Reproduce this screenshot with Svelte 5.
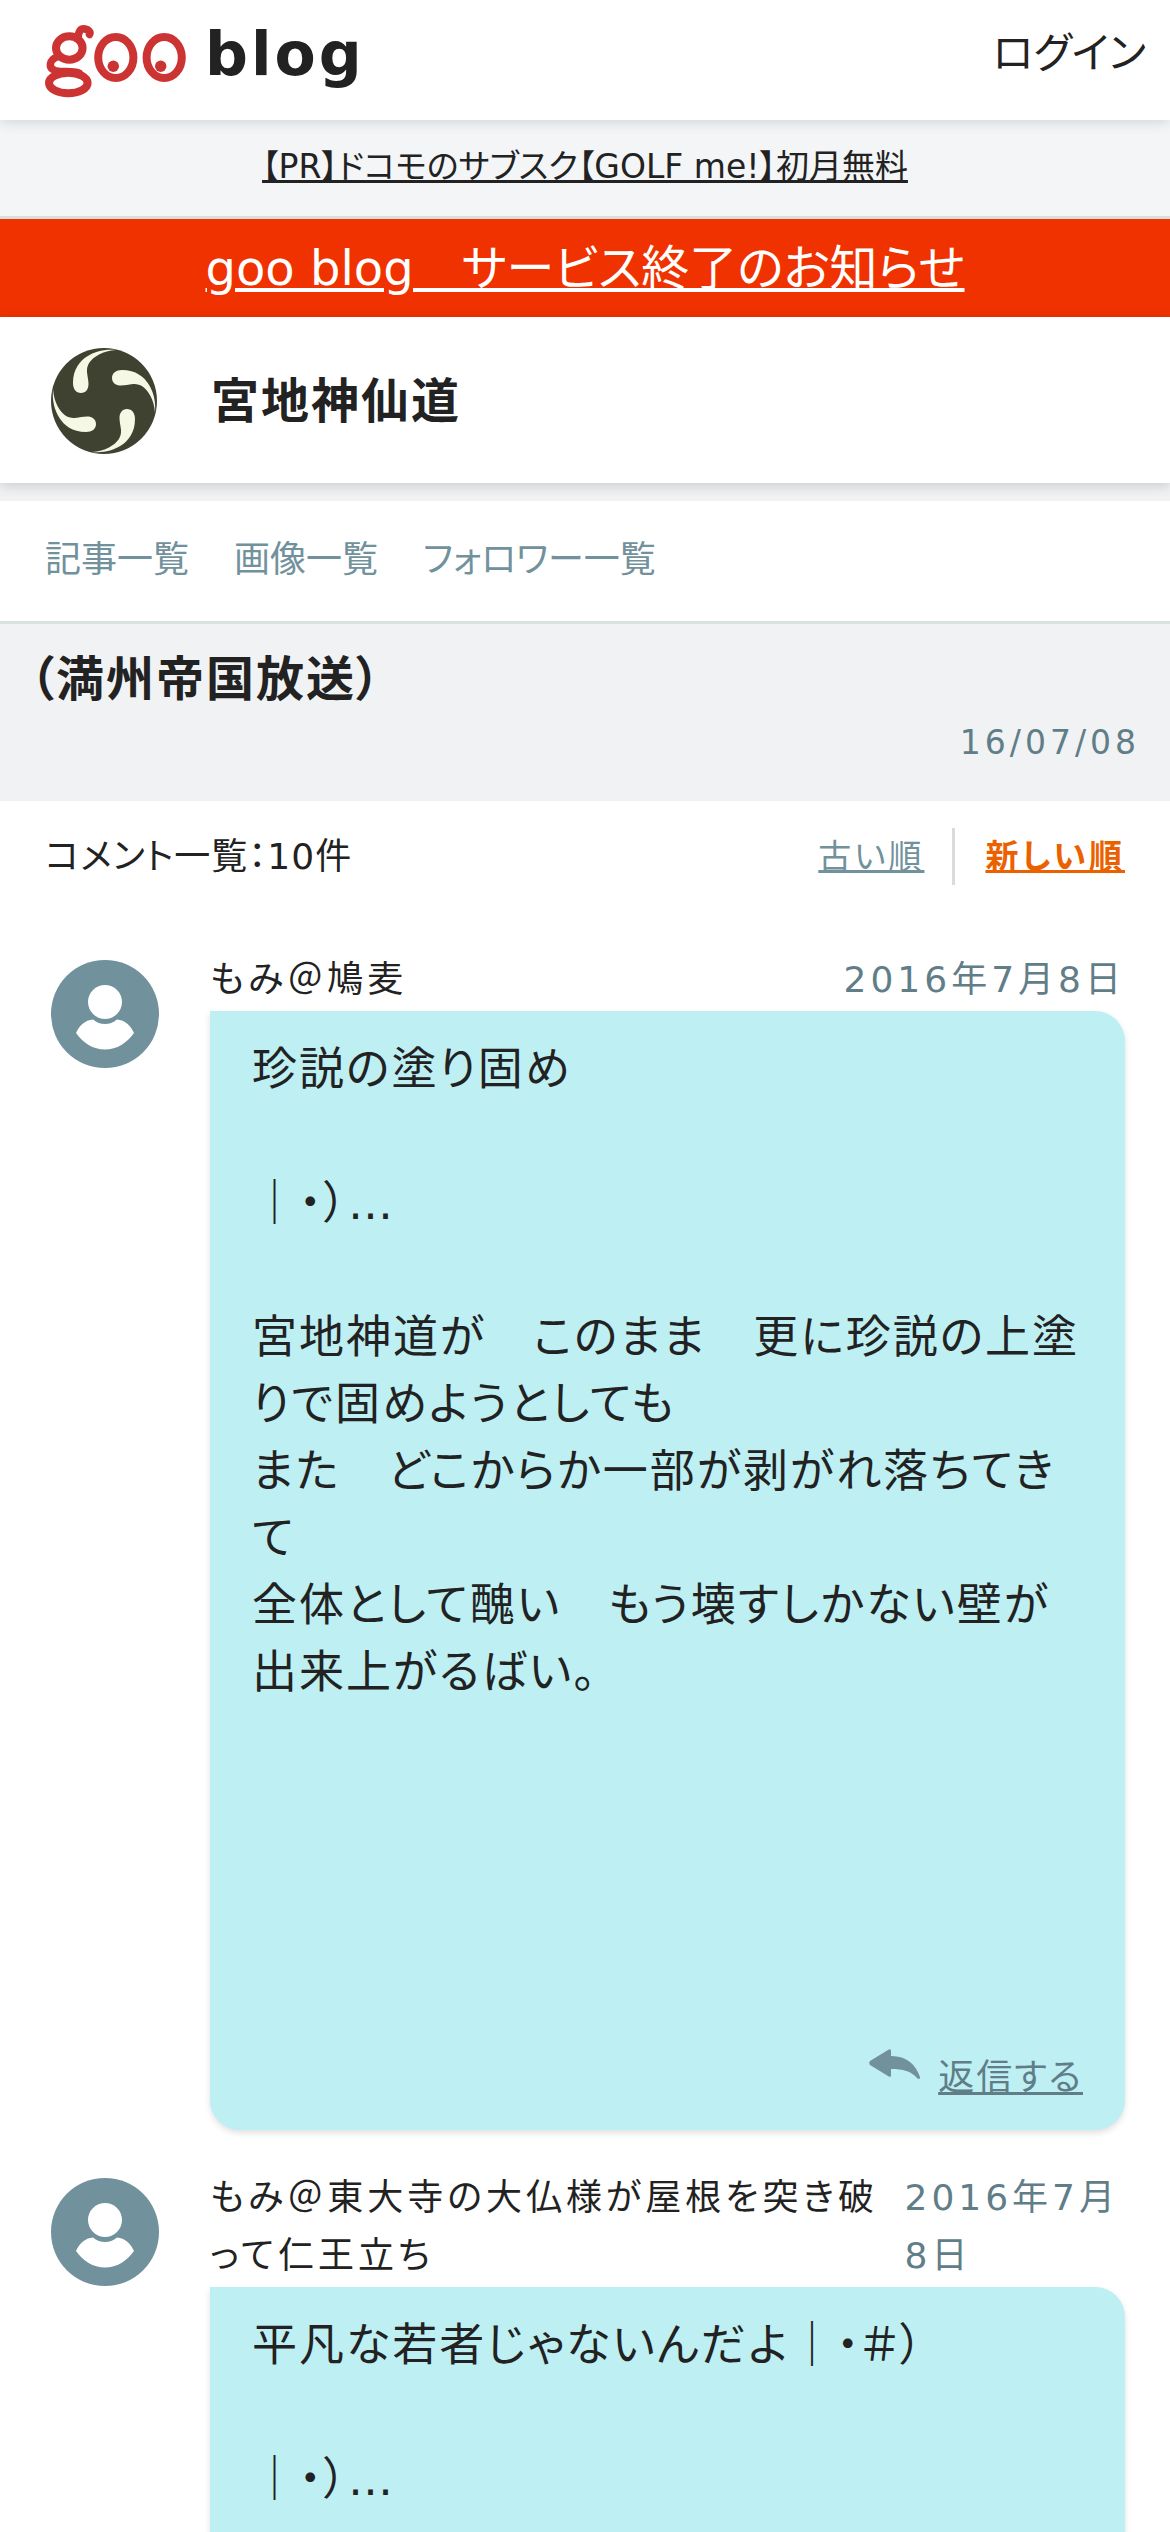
<script lang="ts">
	type Comment = {
		id: number;
		author: string;
		date: string;
		body: string;
	};

	const blogTitle = '宮地神仙道';
	const article = { title: '（満州帝国放送）', date: '16/07/08' };
	const total = 10;

	const menu = [
		{ label: '記事一覧', href: '#entries' },
		{ label: '画像一覧', href: '#images' },
		{ label: 'フォロワー一覧', href: '#followers' },
	];

	const comments: Comment[] = [
		{
			id: 1,
			author: 'もみ＠鳩麦',
			date: '2016年7月8日',
			body: '珍説の塗り固め\n\n｜・）…\n\n宮地神道が　このまま　更に珍説の上塗りで固めようとしても\nまた　どこからか一部が剥がれ落ちてきて\n全体として醜い　もう壊すしかない壁が出来上がるばい。\n\n\n\n\n\n',
		},
		{
			id: 2,
			author: 'もみ＠東大寺の大仏様が屋根を突き破って仁王立ち',
			date: '2016年7月8日',
			body: '平凡な若者じゃないんだよ｜・＃）\n\n｜・）…\n\n\n\n\n\n',
		},
	];

	let order = $state('new');
</script>

<div class="page">
	<header class="site-header">
		<a class="brand" href="#top" aria-label="goo blog">
			<svg class="goo" viewBox="45 23 142 74" aria-hidden="true">
				<g fill="none" stroke="#cb3433" stroke-width="8" stroke-linecap="round">
					<ellipse cx="69.3" cy="47" rx="13.3" ry="11.8" />
					<path d="M78 38C78 30 81 27 85 28C89 29 91 31 89.5 33.5" stroke-width="7.5" />
					<path d="M57 56C49 59 48 67 55 69.5C62 71.5 72 69.5 79 72" stroke-width="7.5" />
					<ellipse cx="68.3" cy="82" rx="19.3" ry="10.2" />
					<ellipse cx="115.8" cy="56.5" rx="17.6" ry="20.5" />
					<ellipse cx="164.2" cy="56.5" rx="17.6" ry="20.5" />
				</g>
				<circle cx="113.3" cy="65.3" r="5.7" fill="#cb3433" />
				<circle cx="160.7" cy="65.3" r="5.7" fill="#cb3433" />
			</svg>
			<span class="brand-name">blog</span>
		</a>
		<a class="login" href="#login">ログイン</a>
	</header>

	<div class="promo">
		<a href="#promo">【PR】ドコモのサブスク【GOLF me!】初月無料</a>
	</div>

	<div class="notice">
		<a href="#notice">goo blog　サービス終了のお知らせ</a>
	</div>

	<div class="blog-header">
		<svg class="blog-icon" viewBox="-53 -53 106 106" aria-hidden="true">
			<circle r="53" fill="#3f4230" />
			{#each [0, 90, 180, 270] as angle}
				<path
					transform="rotate({angle})"
					fill="#f6f8e6"
					d="M-23 -8C-28 -8 -31 -12 -31 -18C-31 -32 -24 -40 -17 -44.5C-9 -49.5 0 -52 12 -51C5 -50.5 0 -49 -5 -46.5C-14 -41.5 -17.5 -36 -17 -29C-16.5 -24 -15.5 -21 -15.5 -17C-15.5 -12 -18 -8 -23 -8Z"
				/>
			{/each}
		</svg>
		<h1>{blogTitle}</h1>
	</div>

	<nav class="menu">
		{#each menu as item}
			<a href={item.href}>{item.label}</a>
		{/each}
	</nav>

	<section class="article-head">
		<h2>{article.title}</h2>
		<time>{article.date}</time>
	</section>

	<main>
		<div class="list-head">
			<p>コメント一覧：{total}件</p>
			<div class="sort">
				<button class:active={order === 'old'} onclick={() => (order = 'old')}>古い順</button>
				<button class:active={order === 'new'} onclick={() => (order = 'new')}>新しい順</button>
			</div>
		</div>

		{#each comments as comment (comment.id)}
			<article class="comment">
				<svg class="avatar" viewBox="0 0 108 108" aria-hidden="true">
					<circle cx="54" cy="54" r="54" fill="#71919c" />
					<circle cx="54" cy="42" r="17" fill="#fff" />
					<path fill="#fff" d="M42 59.5C49 65.5 59 65.5 66 59.5C74 60 80 66 83 73C76 83 66 89.5 54 89.5C42 89.5 32 83 25 73C28 66 34 60 42 59.5Z" />
				</svg>
				<div class="comment-main">
					<div class="comment-meta">
						<span class="author">{comment.author}</span>
						<time>{comment.date}</time>
					</div>
					<div class="bubble">
						<p>{comment.body}</p>
						<a class="reply" href="#reply-{comment.id}">
							<svg viewBox="0 0 51 31" aria-hidden="true">
								<path fill="#71919c" d="M19 1C21 -0.5 22 0.5 22 2V7C38 7 47 16 51 28C51 30 50 31 48 29C42 22 34 20 22 20V26C22 28 21 28.5 19 27L1 16C0 15 0 13 1 12Z" />
							</svg>
							<span>返信する</span>
						</a>
					</div>
				</div>
			</article>
		{/each}
	</main>
</div>

<style>
	:global(body) {
		background: #fff;
	}

	.page {
		color: #222;
		font-family: 'DejaVu Sans', 'Noto Sans CJK JP', sans-serif;
		font-feature-settings: 'palt';
		font-size: 36px;
		line-height: 57px;
	}

	a {
		color: inherit;
	}

	h1,
	h2,
	p {
		margin: 0;
	}

	h1,
	h2 {
		font-size: 48px;
		letter-spacing: 2px;
	}

	.site-header {
		position: relative;
		display: flex;
		justify-content: space-between;
		align-items: flex-start;
		height: 120px;
		padding: 24px 24px 0 45px;
		box-sizing: border-box;
		background: #fff;
		box-shadow: 0 3px 12px rgba(0, 0, 0, 0.12);
	}

	.brand {
		display: flex;
		gap: 18px;
		text-decoration: none;
	}

	.goo {
		width: 142px;
		height: 74px;
	}

	.brand-name {
		font-size: 60px;
		font-weight: 700;
		letter-spacing: 3px;
		line-height: 60px;
	}

	.login {
		font-size: 42px;
		line-height: 60px;
		text-decoration: none;
	}

	.promo {
		padding: 18px 0 21px;
		background: #f3f5f7;
		border-bottom: 3px solid #d8dddd;
		font-size: 33px;
		text-align: center;
	}

	.notice {
		padding: 13px 0;
		background: #f03200;
		color: #fff;
		font-size: 48px;
		line-height: 72px;
		text-align: center;
	}

	.blog-header {
		position: relative;
		display: flex;
		align-items: center;
		gap: 54px;
		padding: 31px 51px 29px;
		background: #fff;
		box-shadow: 0 3px 12px rgba(0, 0, 0, 0.16);
	}

	.blog-icon {
		width: 106px;
		height: 106px;
	}

	.menu {
		display: flex;
		gap: 45px;
		margin-top: 18px;
		padding: 30px 45px 33px;
		border-bottom: 3px solid #d9e2e1;
		color: #71919c;
		box-shadow: 0 -18px 0 #f0f2f4;
	}

	.menu a {
		text-decoration: none;
	}

	.article-head {
		padding: 21px 30px 30px;
		background: #f0f2f4;
	}

	.article-head h2 {
		line-height: 69px;
	}

	time {
		color: #607d88;
		letter-spacing: 4px;
	}

	.article-head time {
		display: block;
		font-size: 33px;
		text-align: right;
	}

	main {
		padding: 27px 45px 0;
	}

	.list-head,
	.sort {
		display: flex;
		align-items: center;
	}

	.list-head {
		justify-content: space-between;
		margin-bottom: 66px;
		letter-spacing: 1px;
	}

	button {
		padding: 0;
		border: 0;
		background: none;
		color: #71919c;
		font: inherit;
		font-feature-settings: inherit;
		font-size: 33px;
		letter-spacing: 3px;
		text-decoration: underline;
		cursor: pointer;
	}

	button + button {
		margin-left: 28px;
		padding-left: 30px;
		border-left: 3px solid #d9dcdc;
	}

	button.active {
		color: #eb6100;
		font-weight: 700;
	}

	.comment {
		display: flex;
		align-items: flex-start;
		gap: 51px;
		padding-left: 6px;
		margin-bottom: 39px;
	}

	.avatar {
		flex: none;
		width: 108px;
		height: 108px;
		margin-top: 9px;
	}

	.comment-main {
		flex: 1;
		min-width: 0;
	}

	.comment-meta {
		display: flex;
		justify-content: space-between;
		gap: 20px;
		padding-bottom: 2px;
		line-height: 58px;
	}

	.author {
		flex-shrink: 9;
		letter-spacing: 4px;
	}

	.comment-meta time {
		flex-shrink: 8;
	}

	.bubble {
		padding: 25px 42px 24px;
		border-radius: 0 30px 30px 30px;
		background: #bdeff3;
		box-shadow: 0 3px 6px rgba(0, 0, 0, 0.12);
	}

	.bubble p {
		margin-bottom: 8px;
		font-size: 45px;
		letter-spacing: 2px;
		line-height: 67px;
		white-space: pre-wrap;
	}

	.reply {
		display: flex;
		justify-content: flex-end;
		gap: 18px;
		color: #607d88;
		letter-spacing: 2px;
		text-decoration: none;
	}

	.reply svg {
		width: 51px;
		height: 31px;
	}

	.reply span {
		text-decoration: underline;
	}
</style>
